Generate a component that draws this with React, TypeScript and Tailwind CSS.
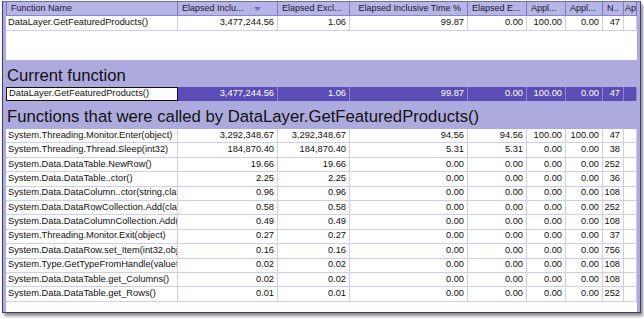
import React from 'react';

const W = ['w-[172px]', 'w-[100px]', 'w-[72px]', 'w-[118px]', 'w-[59px]', 'w-[39px]', 'w-[37px]', 'w-[21px]', 'w-[13px]'];

const headers = ['Function Name', 'Elapsed Inclu...', 'Elapsed Excl...', 'Elapsed Inclusive Time %', 'Elapsed E...', 'Appl...', 'Appl...', 'N..', 'Ap'];

const current = ['DataLayer.GetFeaturedProducts()', '3,477,244.56', '1.06', '99.87', '0.00', '100.00', '0.00', '47', ''];

const called = [
  ['System.Threading.Monitor.Enter(object)', '3,292,348.67', '3,292,348.67', '94.56', '94.56', '100.00', '100.00', '47', ''],
  ['System.Threading.Thread.Sleep(int32)', '184,870.40', '184,870.40', '5.31', '5.31', '0.00', '0.00', '38', ''],
  ['System.Data.DataTable.NewRow()', '19.66', '19.66', '0.00', '0.00', '0.00', '0.00', '252', ''],
  ['System.Data.DataTable..ctor()', '2.25', '2.25', '0.00', '0.00', '0.00', '0.00', '36', ''],
  ['System.Data.DataColumn..ctor(string,clas', '0.96', '0.96', '0.00', '0.00', '0.00', '0.00', '108', ''],
  ['System.Data.DataRowCollection.Add(class', '0.58', '0.58', '0.00', '0.00', '0.00', '0.00', '252', ''],
  ['System.Data.DataColumnCollection.Add(cl', '0.49', '0.49', '0.00', '0.00', '0.00', '0.00', '108', ''],
  ['System.Threading.Monitor.Exit(object)', '0.27', '0.27', '0.00', '0.00', '0.00', '0.00', '37', ''],
  ['System.Data.DataRow.set_Item(int32,obj', '0.16', '0.16', '0.00', '0.00', '0.00', '0.00', '756', ''],
  ['System.Type.GetTypeFromHandle(valuety', '0.02', '0.02', '0.00', '0.00', '0.00', '0.00', '108', ''],
  ['System.Data.DataTable.get_Columns()', '0.02', '0.02', '0.00', '0.00', '0.00', '0.00', '108', ''],
  ['System.Data.DataTable.get_Rows()', '0.01', '0.01', '0.00', '0.00', '0.00', '0.00', '252', ''],
];

function HeaderRow() {
  return (
    <div className="flex h-[14px] bg-[#b7b5e6] border-b border-[#8886c8]">
      {headers.map((h, i) => (
        <div
          key={i}
          className={`${W[i]} shrink-0 flex items-center overflow-hidden whitespace-nowrap border-r border-[#7b78bf] text-[9px] text-[#151530] ${i === 3 ? 'justify-end pr-[6px]' : i === 8 ? 'pl-[1px]' : 'pl-[4px]'} ${i === 0 ? 'border-l' : ''}`}
        >
          {h}
          {i === 1 && (
            <svg width="7" height="4" viewBox="0 0 7 4" className="ml-[10px] shrink-0">
              <polygon points="0,0 7,0 3.5,4" fill="#6f6cc4" />
            </svg>
          )}
        </div>
      ))}
    </div>
  );
}

function DataRow({ cells, h }: { cells: string[]; h: string }) {
  return (
    <div className={`flex ${h} border-b border-[#cfcdf2]`}>
      {cells.map((c, i) => (
        <div
          key={i}
          className={`${W[i]} shrink-0 flex items-center overflow-hidden whitespace-nowrap border-r border-[#cfcdf2] text-[9.3px] text-[#111] ${i === 0 ? 'pl-[2px]' : 'justify-end pr-[3px]'}`}
        >
          {c}
        </div>
      ))}
    </div>
  );
}

function CurrentRow() {
  return (
    <div className="flex h-[14px] bg-[#5a4eb6]">
      {current.map((c, i) => (
        <div
          key={i}
          className={
            i === 0
              ? `${W[i]} shrink-0 flex items-center bg-white border border-[#111] pl-[2px] text-[9.3px] text-[#111] whitespace-nowrap overflow-hidden`
              : `${W[i]} shrink-0 flex items-center justify-end pr-[3px] border-r border-[#8f87d6] text-[9.3px] text-white whitespace-nowrap overflow-hidden`
          }
        >
          {c}
        </div>
      ))}
    </div>
  );
}

export default function App() {
  return (
    <div className="w-[644px] h-[319px] bg-white pt-[1px] font-['Liberation_Sans',Arial,sans-serif]">
      <div className="ml-[2px] w-[639px] h-[312px] border border-[#3d3b72] bg-[#adabde] px-[3px] border-t-[#6f6da8] shadow-[2px_3px_3px_rgba(0,0,0,0.45)] flex flex-col">
        <div className="h-[58px] bg-white flex flex-col">
          <HeaderRow />
          <DataRow cells={current} h="h-[14.5px]" />
        </div>
        <div className="h-[27px] flex items-end pb-[2px] pl-[1px] text-[16.7px] leading-none text-[#111]">
          Current function
        </div>
        <CurrentRow />
        <div className="h-[28px] flex items-end pb-[3px] pl-[1px] text-[16.7px] leading-none text-[#111]">
          Functions that were called by DataLayer.GetFeaturedProducts()
        </div>
        <div className="flex-1 bg-white flex flex-col">
          {called.map((r, i) => (
            <DataRow key={i} cells={r} h="h-[14.4px]" />
          ))}
        </div>
      </div>
    </div>
  );
}
